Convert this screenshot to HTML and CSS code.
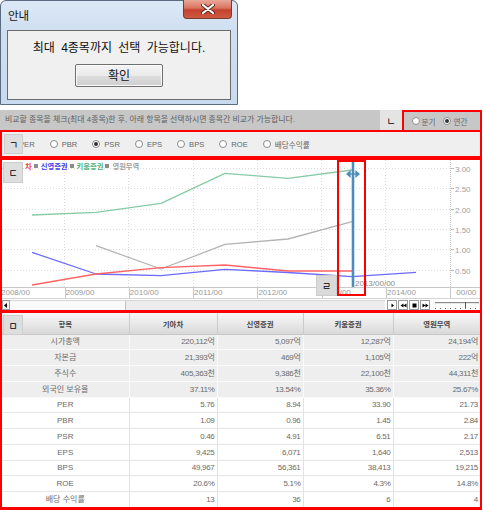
FILE: index.html
```html
<!DOCTYPE html>
<html lang="ko">
<head>
<meta charset="utf-8">
<title>종목 비교</title>
<link rel="stylesheet" href="styles.css">
</head>
<body>
<div class="dialog">
  <div class="dlg-head">
    <span class="dlg-title">안내</span>
    <div class="dlg-close">
      <svg width="14" height="10" viewBox="0 0 14 10"><path d="M2 1 L12 9 M12 1 L2 9" stroke="#5a2a22" stroke-width="4" stroke-linecap="round"/><path d="M2 1 L12 9 M12 1 L2 9" stroke="#ffffff" stroke-width="2.2" stroke-linecap="round"/></svg>
    </div>
  </div>
  <div class="dlg-body">
    <div class="dlg-msg">최대 4종목까지 선택 가능합니다.</div>
    <div class="dlg-btn">확인</div>
  </div>
</div>

<div class="panel">
  <div class="topbar">
    <div class="hint">비교할 종목을 체크(최대 4종목)한 후, 아래 항목을 선택하시면 종목간 비교가 가능합니다.</div>
    <div class="tag tag-l">ㄴ</div>
    <div class="period">
      <span class="opt"><span class="radio"></span>분기</span>
      <span class="opt"><span class="radio on"></span>연간</span>
    </div>
  </div>

  <div class="metrics">
    <span class="opt"><span class="radio"></span>PER</span>
    <span class="opt"><span class="radio"></span>PBR</span>
    <span class="opt"><span class="radio on"></span>PSR</span>
    <span class="opt"><span class="radio"></span>EPS</span>
    <span class="opt"><span class="radio"></span>BPS</span>
    <span class="opt"><span class="radio"></span>ROE</span>
    <span class="opt"><span class="radio"></span>배당수익률</span>
    <div class="tag tag-a">ㄱ</div>
  </div>

  <div class="chart">
    <svg class="plot" width="478" height="127" viewBox="2 160 478 127">
      <g stroke="#dcdcdc" stroke-width="1" stroke-dasharray="1 2">
        <line x1="2" y1="168.5" x2="450" y2="168.5"/>
        <line x1="2" y1="188.5" x2="450" y2="188.5"/>
        <line x1="2" y1="209.5" x2="450" y2="209.5"/>
        <line x1="2" y1="229.5" x2="450" y2="229.5"/>
        <line x1="2" y1="249.5" x2="450" y2="249.5"/>
        <line x1="2" y1="270.5" x2="450" y2="270.5"/>
        <line x1="64.5" y1="160" x2="64.5" y2="287"/>
        <line x1="128.5" y1="160" x2="128.5" y2="287"/>
        <line x1="193.5" y1="160" x2="193.5" y2="287"/>
        <line x1="257.5" y1="160" x2="257.5" y2="287"/>
        <line x1="321.5" y1="160" x2="321.5" y2="287"/>
        <line x1="385.5" y1="160" x2="385.5" y2="287"/>
      </g>
      <line x1="450.5" y1="160" x2="450.5" y2="287" stroke="#c8c8c8" stroke-dasharray="1 1"/>
      <g stroke="#b8b8b8" stroke-width="1">
        <line x1="451" y1="168.5" x2="454" y2="168.5"/>
        <line x1="451" y1="188.5" x2="454" y2="188.5"/>
        <line x1="451" y1="209.5" x2="454" y2="209.5"/>
        <line x1="451" y1="229.5" x2="454" y2="229.5"/>
        <line x1="451" y1="249.5" x2="454" y2="249.5"/>
        <line x1="451" y1="270.5" x2="454" y2="270.5"/>
      </g>
      <g class="ylab" font-size="8" fill="#a0a0a0">
        <text x="455" y="171.5">3.00</text>
        <text x="455" y="191.5">2.50</text>
        <text x="455" y="212.5">2.00</text>
        <text x="455" y="232.5">1.50</text>
        <text x="455" y="252.5">1.00</text>
        <text x="455" y="273.5">0.50</text>
      </g>
      <g fill="none" stroke-width="1.3" stroke-linejoin="round">
        <polyline stroke="#86cba6" points="32,215 96,212.3 161,203.3 225,173.3 288,178.3 352,170"/>
        <polyline stroke="#b4b4b4" points="96,245.7 161,269 225,244.3 288,239 352,221.7"/>
        <polyline stroke="#6b6bff" points="32,252.3 96,274 161,275.7 225,269.3 288,272.5 352,276.7 416,272.3"/>
        <polyline stroke="#ff6464" points="32,285 96,274 161,267.7 225,265 288,271 352,271"/>
      </g>
      <line x1="353" y1="160" x2="353" y2="287" stroke="#4d8db8" stroke-width="2.6"/>
      <g stroke="#4d8db8" stroke-width="1.3" fill="#4d8db8">
        <line x1="348" y1="174" x2="358" y2="174"/>
        <path d="M347 174 L350 171.5 L350 176.5 Z"/>
        <path d="M359 174 L356 171.5 L356 176.5 Z"/>
      </g>
      <text class="ylab" x="355" y="286" font-size="8" fill="#8a8a8a">2013/00/00</text>
    </svg>

    <div class="axis">
      <div class="cell c0">2008/00</div>
      <div class="cell">2009/00</div>
      <div class="cell">2010/00</div>
      <div class="cell">2011/00</div>
      <div class="cell">2012/00</div>
      <div class="cell chid">/00</div>
      <div class="cell">2014/00</div>
      <div class="cell clast">00/00</div>
    </div>

    <div class="scroll">
      <div class="sbtn">
        <svg width="6" height="7" viewBox="0 0 6 7"><path d="M1 3.5 L4 1 L4 6 Z" fill="#000"/></svg>
      </div>
      <div class="track"><div class="thumb"></div></div>
      <div class="ctrls">
        <div class="cbtn"><svg width="7" height="7" viewBox="0 0 7 7"><path d="M2.5 1.5 L5 3.5 L2.5 5.5 Z" fill="#000"/></svg></div>
        <div class="cbtn"><svg width="7" height="7" viewBox="0 0 7 7"><path d="M0.5 3.5 L3.5 1.5 L3.5 5.5 Z M3.5 3.5 L6.5 1.5 L6.5 5.5 Z" fill="#000"/></svg></div>
        <div class="cbtn"><svg width="7" height="7" viewBox="0 0 7 7"><rect x="1.5" y="1.5" width="4" height="4" fill="#000"/></svg></div>
        <div class="cbtn"><svg width="7" height="7" viewBox="0 0 7 7"><path d="M0.5 1.5 L3.5 3.5 L0.5 5.5 Z M3.5 1.5 L6.5 3.5 L3.5 5.5 Z" fill="#000"/></svg></div>
      </div>
      <div class="slider">
        <svg width="46" height="11" viewBox="0 0 46 11">
          <line x1="1" y1="3.5" x2="45" y2="3.5" stroke="#8a8a8a"/>
          <line x1="1" y1="4.5" x2="45" y2="4.5" stroke="#e8e8e8"/>
          <line x1="1" y1="9.5" x2="45" y2="9.5" stroke="#6a6a6a" stroke-dasharray="1 4"/>
          <path d="M31.5 3 L31.5 9" stroke="#555" stroke-width="1"/>
        </svg>
      </div>
    </div>

    <div class="legend">
      <span class="lg red">차</span>
      <span class="sq"></span><span class="lg blue">신영증권</span>
      <span class="sq"></span><span class="lg green">키움증권</span>
      <span class="sq"></span><span class="lg gray">영원무역</span>
    </div>
    <div class="tag tag-c">ㄷ</div>
    <div class="mark"></div>
    <div class="tag tag-r">ㄹ</div>
  </div>

  <div class="grid">
    <table class="tbl">
      <colgroup>
        <col class="w0"><col class="w1"><col class="w2"><col class="w3"><col class="w4">
      </colgroup>
      <thead>
        <tr><th>항목</th><th>기아차</th><th>신영증권</th><th>키움증권</th><th>영원무역</th></tr>
      </thead>
      <tbody>
        <tr class="shade"><td>시가총액</td><td>220,112억</td><td>5,097억</td><td>12,287억</td><td>24,194억</td></tr>
        <tr class="shade"><td>자본금</td><td>21,393억</td><td>469억</td><td>1,105억</td><td>222억</td></tr>
        <tr class="shade"><td>주식수</td><td>405,363천</td><td>9,386천</td><td>22,100천</td><td>44,311천</td></tr>
        <tr class="shade"><td>외국인 보유율</td><td>37.11%</td><td>13.54%</td><td>35.36%</td><td>25.67%</td></tr>
        <tr><td>PER</td><td>5.76</td><td>8.94</td><td>33.90</td><td>21.73</td></tr>
        <tr><td>PBR</td><td>1.09</td><td>0.96</td><td>1.45</td><td>2.84</td></tr>
        <tr><td>PSR</td><td>0.46</td><td>4.91</td><td>6.51</td><td>2.17</td></tr>
        <tr><td>EPS</td><td>9,425</td><td>6,071</td><td>1,640</td><td>2,513</td></tr>
        <tr><td>BPS</td><td>49,967</td><td>56,361</td><td>38,413</td><td>19,215</td></tr>
        <tr><td>ROE</td><td>20.6%</td><td>5.1%</td><td>4.3%</td><td>14.8%</td></tr>
        <tr><td>배당 수익률</td><td>13</td><td>36</td><td>6</td><td>4</td></tr>
      </tbody>
    </table>
    <div class="tag tag-t">ㅁ</div>
  </div>
</div>
</body>
</html>
```

FILE: styles.css
```css
* { box-sizing: border-box; }

html, body {
  margin: 0;
  padding: 0;
  background: #ffffff;
}

body {
  width: 483px;
  height: 510px;
  overflow: hidden;
  font-family: "Liberation Sans", "Noto Sans CJK KR", sans-serif;
  color: #555;
}

/* ---------- dialog ---------- */
.dialog {
  width: 238px;
  height: 105px;
  border: 1px solid #5b6c82;
  border-radius: 6px 6px 0 0;
  padding: 0 6px 4px 6px;
  background: linear-gradient(to bottom, #dce8f6 0%, #cfdff1 30%, #c8daee 100%);
  display: flex;
  flex-direction: column;
}

.dlg-head {
  height: 29px;
  display: flex;
  justify-content: space-between;
  align-items: flex-start;
}

.dlg-title {
  margin-top: 7px;
  padding-left: 1px;
  font-family: "Noto Sans CJK KR", sans-serif;
  font-size: 11.5px;
  line-height: 14px;
  color: #111;
}

.dlg-close {
  width: 49px;
  height: 19px;
  margin-top: -1px;
  margin-right: -1px;
  border: 1px solid #7d3a31;
  border-top: 0;
  border-radius: 0 0 4px 4px;
  background: linear-gradient(to bottom, #e9a899 0%, #d9735f 45%, #c4412c 55%, #cf5a44 100%);
  display: flex;
  align-items: center;
  justify-content: center;
}

.dlg-body {
  flex: 1;
  border: 1px solid #6b6b6b;
  background: #f0f0f0;
  display: flex;
  flex-direction: column;
  align-items: center;
}

.dlg-msg {
  margin-top: 9px;
  font-size: 12px;
  line-height: 16px;
  word-spacing: 3px;
  color: #111;
}

.dlg-btn {
  margin-top: 8px;
  width: 88px;
  height: 23px;
  border: 1px solid #6f6f6f;
  border-radius: 2px;
  box-shadow: inset 0 0 0 1px #fbfbfb;
  background: linear-gradient(to bottom, #f3f3f3 0%, #ebebeb 50%, #dddddd 51%, #cfcfcf 100%);
  font-family: "Noto Sans CJK KR", sans-serif;
  font-size: 12px;
  line-height: 20px;
  text-align: center;
  color: #111;
}

/* ---------- panel ---------- */
.panel {
  width: 482px;
  margin-top: 5px;
}

.tag {
  display: flex;
  align-items: center;
  justify-content: center;
  background: #dedede;
  border: 1px solid #cdcdcd;
  font-family: "Noto Sans CJK KR", sans-serif;
  font-size: 10px;
  color: #000;
}

.topbar {
  height: 20px;
  display: flex;
}

.hint {
  flex: 1;
  background: #c7c7c7;
  padding-left: 5px;
  font-size: 7.9px;
  line-height: 20px;
  color: #5e5e5e;
  white-space: nowrap;
  overflow: hidden;
}

.tag-l {
  width: 22px;
  height: 20px;
  background: #e4e4e4;
  border-color: #e4e4e4;
}

.period {
  width: 80px;
  height: 20px;
  border: 2px solid #ff0000;
  border-bottom: 0;
  background: #c7c7c7;
  display: flex;
  align-items: center;
  padding-left: 7.5px;
  gap: 8px;
}

.period .opt { gap: 2px; }

.opt {
  display: flex;
  align-items: center;
  gap: 4px;
  font-size: 7.6px;
  color: #666;
  white-space: nowrap;
}

.radio {
  width: 8px;
  height: 8px;
  border: 1px solid #8c8c8c;
  border-radius: 50%;
  background: #ffffff;
  display: flex;
  align-items: center;
  justify-content: center;
}

.radio.on::after {
  content: "";
  width: 4px;
  height: 4px;
  border-radius: 50%;
  background: #333;
}

.metrics {
  position: relative;
  height: 28px;
  border: 2px solid #ff0000;
  background: #efefef;
  display: flex;
  align-items: center;
  padding-left: 5px;
  gap: 15px;
}

.tag-a {
  position: absolute;
  left: 2px;
  top: 2px;
  width: 19px;
  height: 20px;
}

/* ---------- chart ---------- */
.chart {
  position: relative;
  height: 152px;
  border: 2px solid #ff0000;
  border-bottom: 0;
  background: #ffffff;
}

.plot {
  display: block;
}

.ylab {
  font-family: "Liberation Sans", sans-serif;
}

.axis {
  height: 12px;
  border-top: 1px solid #c9c9c9;
  border-bottom: 1px solid #d4d4d4;
  display: flex;
}

.cell {
  width: 64.3px;
  border-left: 1px solid #c9c9c9;
  font-size: 8px;
  line-height: 10px;
  color: #9a9a9a;
  padding-left: 0;
  white-space: nowrap;
  overflow: hidden;
}

.cell.c0 {
  width: 62.5px;
  border-left: 0;
  text-indent: -1px;
}

.cell.chid {
  padding-left: 17px;
}

.cell.clast {
  width: 28px;
  padding-left: 5px;
}

.scroll {
  height: 11px;
  display: flex;
}

.sbtn {
  width: 8px;
  height: 10px;
  margin-top: 1px;
  border: 1px solid #9a9a9a;
  background: #f4f4f4;
  display: flex;
  align-items: center;
  justify-content: center;
}

.track {
  flex: 1;
  height: 10px;
  margin-top: 1px;
  border-top: 1px solid #d6d6d6;
  background: #fafafa;
  display: flex;
  justify-content: flex-end;
}

.thumb {
  width: 260px;
  height: 9px;
  border-left: 1px solid #c4c4c4;
  background: #ececec;
}

.ctrls {
  display: flex;
  gap: 1px;
  margin-left: 2px;
  margin-top: 1px;
}

.cbtn {
  width: 10px;
  height: 10px;
  border: 1px solid #9a9a9a;
  background: #ffffff;
  display: flex;
  align-items: center;
  justify-content: center;
}

.slider {
  margin-left: 4px;
  width: 46px;
}

.slider svg { display: block; }

.legend {
  position: absolute;
  left: 23px;
  top: 1px;
  display: flex;
  align-items: center;
  font-family: "Noto Sans CJK KR", sans-serif;
  font-size: 7.3px;
  font-weight: bold;
  line-height: 10px;
}

.sq {
  width: 4px;
  height: 4px;
  background: #8c8c8c;
  margin-right: 3px;
}

.lg { margin-right: 2px; }
.lg.red { color: #ec3b3b; }
.lg.blue { color: #3b3bec; }
.lg.green { color: #4fb581; }
.lg.gray { color: #a0a0a0; }

.tag-c {
  position: absolute;
  left: 1px;
  top: 2px;
  width: 20px;
  height: 21px;
}

.mark {
  position: absolute;
  left: 335px;
  top: 0;
  width: 29px;
  height: 136px;
  border: 2px solid #ff0000;
}

.tag-r {
  position: absolute;
  left: 314px;
  top: 115px;
  width: 21px;
  height: 21px;
  background: #dadada;
}

/* ---------- table ---------- */
.grid {
  position: relative;
  height: 200px;
  border: 2px solid #ff0000;
  border-top-width: 3px;
  border-bottom-width: 3px;
  overflow: hidden;
}

.tbl {
  width: 478px;
  border-collapse: collapse;
  table-layout: fixed;
  font-size: 8px;
  color: #6a6a6a;
}

.w0 { width: 127px; }
.w1 { width: 88px; }
.w2 { width: 86px; }
.w3 { width: 90px; }
.w4 { width: 87px; }

.tbl thead tr { height: 21px; }
.tbl tbody tr { height: 15.75px; }

.tbl th {
  padding: 0;
  background: linear-gradient(to bottom, #f7f7f7 0%, #e9e9e9 50%, #d8d8d8 100%);
  border-right: 1px solid #cbcbcb;
  border-bottom: 1px solid #c8c8c8;
  font-family: "Noto Sans CJK KR", sans-serif;
  font-size: 7.4px;
  font-weight: bold;
  color: #444;
  text-align: center;
}

.tbl th:last-child { border-right: 0; }

.tbl td {
  padding: 1px 2px 0 0;
  line-height: 12px;
  border-right: 1px solid #e2e2e2;
  border-bottom: 1px solid #e6e6e6;
  text-align: right;
  white-space: nowrap;
  letter-spacing: -0.3px;
}

.tbl td:first-child {
  text-align: center;
  padding: 1px 0 0 0;
  letter-spacing: 0;
}

.tbl td:last-child { border-right: 0; }

.tbl tr.shade td {
  background: #eeeeee;
  border-color: #fafafa;
}

.tag-t {
  position: absolute;
  left: 1px;
  top: 2px;
  width: 20px;
  height: 20px;
}
```
